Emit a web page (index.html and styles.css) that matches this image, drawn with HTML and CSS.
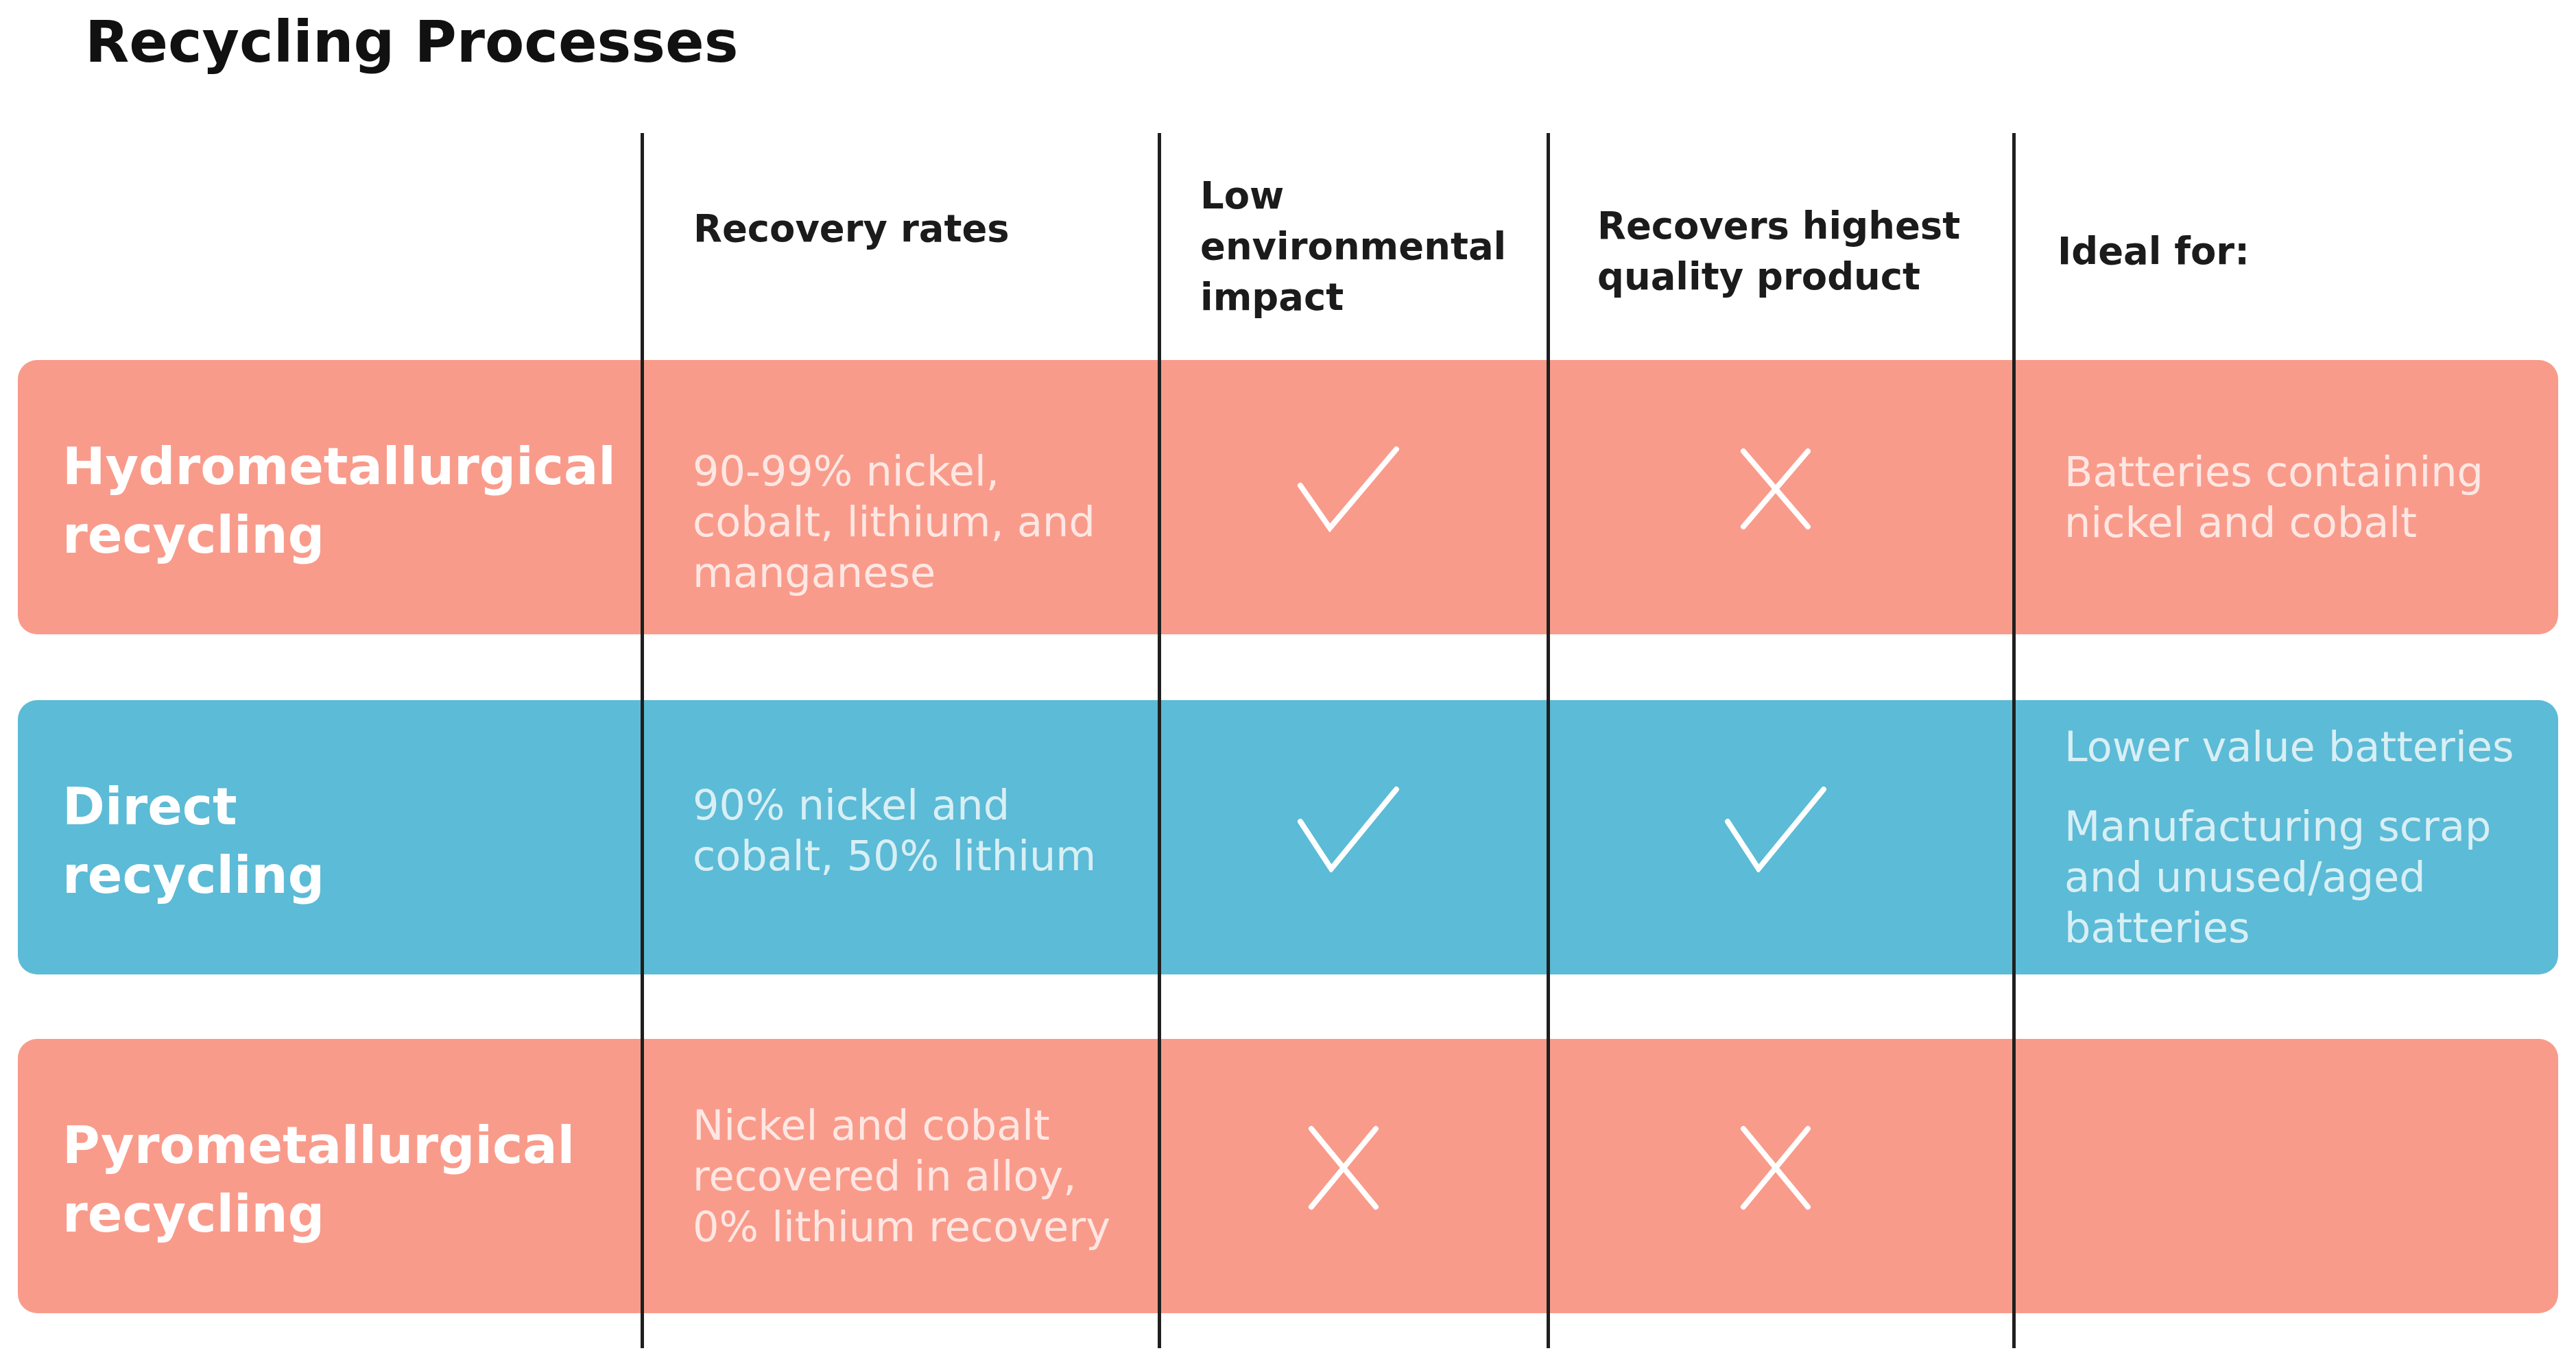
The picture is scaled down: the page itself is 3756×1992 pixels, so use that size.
FILE: index.html
```html
<!DOCTYPE html>
<html lang="en">
<head>
<meta charset="utf-8">
<title>Recycling Processes</title>
<link rel="stylesheet" href="styles.css">
</head>
<body>
<main class="page">
  <h1 class="title">Recycling Processes</h1>
  <div class="table">
    <div class="band pink r2"></div>
    <div class="band blue r4"></div>
    <div class="band pink r6"></div>

    <div class="cell head r1 c2 head-rates"><span>Recovery rates</span></div>
    <div class="cell head r1 c3 head-env"><span>Low<br>environmental<br>impact</span></div>
    <div class="cell head r1 c4 head-quality"><span>Recovers highest<br>quality product</span></div>
    <div class="cell head r1 c5 head-ideal"><span>Ideal for:</span></div>

    <div class="cell label r2 c1"><span>Hydrometallurgical<br>recycling</span></div>
    <div class="cell text r2 c2 text-low"><span>90-99% nickel,<br>cobalt, lithium, and<br>manganese</span></div>
    <div class="cell mark r2 c3">
      <svg class="check" viewBox="0 0 150 126" width="150" height="126" aria-hidden="true"><path d="M5 58 L48 120 L145 5"/></svg>
    </div>
    <div class="cell mark r2 c4">
      <svg class="cross" viewBox="0 0 104 120" width="104" height="120" aria-hidden="true"><path d="M5 5 L99 115 M99 5 L5 115"/></svg>
    </div>
    <div class="cell text r2 c5"><span>Batteries containing<br>nickel and cobalt</span></div>

    <div class="cell label r4 c1"><span>Direct<br>recycling</span></div>
    <div class="cell text r4 c2 text-high"><span>90% nickel and<br>cobalt, 50% lithium</span></div>
    <div class="cell mark r4 c3">
      <svg class="check" viewBox="0 0 150 126" width="150" height="126" aria-hidden="true"><path d="M5 52 L50 121 L145 5"/></svg>
    </div>
    <div class="cell mark r4 c4">
      <svg class="check" viewBox="0 0 150 126" width="150" height="126" aria-hidden="true"><path d="M5 52 L50 121 L145 5"/></svg>
    </div>
    <div class="cell text r4 c5">
      <p>Lower value batteries</p>
      <p class="para-gap">Manufacturing scrap<br>and unused/aged<br>batteries</p>
    </div>

    <div class="cell label r6 c1"><span>Pyrometallurgical<br>recycling</span></div>
    <div class="cell text r6 c2"><span>Nickel and cobalt<br>recovered in alloy,<br>0% lithium recovery</span></div>
    <div class="cell mark r6 c3 mark-left">
      <svg class="cross" viewBox="0 0 104 124" width="104" height="124" aria-hidden="true"><path d="M5 5 L99 119 M99 5 L5 119"/></svg>
    </div>
    <div class="cell mark r6 c4">
      <svg class="cross" viewBox="0 0 104 124" width="104" height="124" aria-hidden="true"><path d="M5 5 L99 119 M99 5 L5 119"/></svg>
    </div>
    <div class="cell text r6 c5"></div>

    <div class="vline c2"></div>
    <div class="vline c3"></div>
    <div class="vline c4"></div>
    <div class="vline c5"></div>
  </div>
</main>
</body>
</html>
```

FILE: styles.css
```css
* {
  box-sizing: border-box;
}

html,
body {
  margin: 0;
  padding: 0;
  background: #ffffff;
}

body {
  font-family: "DejaVu Sans", "Liberation Sans", sans-serif;
  color: #1b1b1b;
}

.page {
  width: 3756px;
  height: 1992px;
  padding: 20px 26px 0 26px;
}

.title {
  margin: 0 0 91px 98px;
  font-size: 83.6px;
  line-height: 83px;
  font-weight: 700;
  color: #111111;
}

.table {
  display: grid;
  grid-template-columns: 910px 754px 567px 679px 794px;
  grid-template-rows: 331px 400px 96px 400px 94px 400px 51px;
}

.band {
  grid-column: 1 / -1;
  border-radius: 28px;
}

.pink {
  background: #f99b8b;
}

.blue {
  background: #5cbbd6;
}

.r1 { grid-row: 1; }
.r2 { grid-row: 2; }
.r4 { grid-row: 4; }
.r6 { grid-row: 6; }

.c1 { grid-column: 1; }
.c2 { grid-column: 2; }
.c3 { grid-column: 3; }
.c4 { grid-column: 4; }
.c5 { grid-column: 5; }

.cell {
  display: flex;
  flex-direction: column;
  justify-content: center;
  z-index: 1;
}

.head {
  font-size: 54.4px;
  line-height: 74px;
  font-weight: 700;
  color: #1b1b1b;
  padding-top: 14px;
}

.head-rates {
  padding-left: 75px;
  padding-top: 0;
  padding-bottom: 52px;
}

.head-env {
  padding-left: 60px;
  padding-top: 0;
}

.head-quality {
  padding-left: 72px;
}

.head-ideal {
  padding-left: 64px;
}

.label {
  font-size: 74.6px;
  line-height: 100px;
  font-weight: 700;
  color: #ffffff;
  padding-left: 65px;
  padding-top: 12px;
}

.text {
  font-size: 60.5px;
  line-height: 74px;
  color: rgba(255, 255, 255, 0.76);
  padding-left: 74px;
}

.text p {
  margin: 0;
}

.text .para-gap {
  margin-top: 42px;
}

.text-low {
  padding-top: 72px;
}

.text-high {
  padding-bottom: 20px;
}

.mark {
  align-items: center;
  padding: 0 16px 24px 0;
}

.mark-left {
  padding-right: 30px;
}

.mark svg {
  display: block;
  fill: none;
  stroke: #ffffff;
  stroke-width: 8;
  stroke-linecap: round;
  stroke-linejoin: miter;
}

.vline {
  grid-row: 1 / -1;
  width: 5px;
  margin-left: -2px;
  background: #1f1f1f;
  z-index: 2;
}
```
